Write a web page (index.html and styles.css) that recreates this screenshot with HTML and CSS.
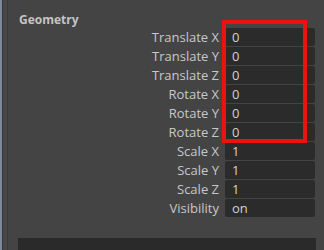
FILE: index.html
```html
<!DOCTYPE html>
<html lang="en">
<head>
    <meta charset="UTF-8">
    <meta name="viewport" content="width=device-width, initial-scale=1.0">
    <title>Attribute Editor - Geometry</title>
    <link rel="stylesheet" href="styles.css">
</head>
<body>
    <div class="panel">
        <div class="edge"></div>
        <div class="content">
            <div class="section-title">Geometry</div>

            <div class="attrs">
                <div class="highlight"></div>

                <div class="row"><label>Translate X</label><div class="field">0</div></div>
                <div class="row"><label>Translate Y</label><div class="field">0</div></div>
                <div class="row"><label>Translate Z</label><div class="field">0</div></div>
                <div class="row"><label>Rotate X</label><div class="field">0</div></div>
                <div class="row"><label>Rotate Y</label><div class="field">0</div></div>
                <div class="row"><label>Rotate Z</label><div class="field">0</div></div>
                <div class="row"><label>Scale X</label><div class="field">1</div></div>
                <div class="row"><label>Scale Y</label><div class="field">1</div></div>
                <div class="row"><label>Scale Z</label><div class="field">1</div></div>
                <div class="row"><label>Visibility</label><div class="field">on</div></div>
            </div>

            <div class="bottom-bar"></div>
        </div>
    </div>
</body>
</html>
```

FILE: styles.css
```css
body {
    margin: 0;
    background-color: #444444;
    font-family: "Open Sans", "DejaVu Sans", sans-serif;
    overflow: hidden;
}
.panel {
    display: flex;
    height: 250px;
}
.edge {
    width: 8px;
    flex: none;
    background: linear-gradient(to right,
        #7d8b99 0, #7d8b99 2px,
        #363636 2px, #363636 3px,
        #474747 3px, #474747 7px,
        #3a3a3a 7px, #3a3a3a 8px);
}
.content {
    flex: 1;
    display: flex;
    flex-direction: column;
}
.section-title {
    margin: 11px 0 0 11px;
    height: 17px;
    font-size: 12px;
    font-weight: bold;
    color: #c4c4c4;
}
.attrs {
    position: relative;
    display: flex;
    flex-direction: column;
    gap: 1px;
}
.row {
    display: grid;
    grid-template-columns: 211px 90px;
    column-gap: 6px;
    height: 18px;
    align-items: center;
}
.row label {
    text-align: right;
    font-size: 13px;
    color: #c8c8c8;
}
.field {
    height: 18px;
    line-height: 18px;
    background-color: #2b2b2b;
    border-radius: 2px;
    padding-left: 7px;
    font-size: 13px;
    color: #d2d2d2;
}
.highlight {
    position: absolute;
    left: 214px;
    top: -8px;
    width: 77px;
    height: 115px;
    border: 4px solid #ee1111;
    pointer-events: none;
    z-index: 1;
}
.bottom-bar {
    margin: 21px 0 0 10px;
    width: 298px;
    flex: 1;
    background-color: #2a2a2a;
}
```
